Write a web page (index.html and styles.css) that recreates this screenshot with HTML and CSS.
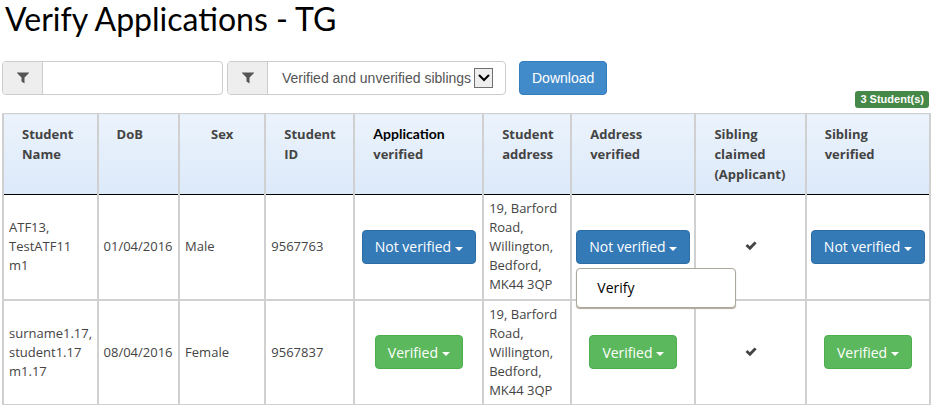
FILE: index.html
```html
<!DOCTYPE html>
<html lang="en">
<head>
  <meta charset="UTF-8">
  <meta name="viewport" content="width=device-width, initial-scale=1.0">
  <title>Verify Applications - TG</title>
  <link rel="stylesheet" href="styles.css">
</head>
<body>

<svg width="0" height="0" class="sprite">
  <symbol id="icon-filter" viewBox="0 0 12 12">
    <path d="M0 0.500H12V1L7.500 5.500V11.500L4.500 9.500V5.500L0 1Z"/>
  </symbol>
  <symbol id="icon-check" viewBox="0 0 12 10">
    <path d="M0.500 5L2.500 3L4.800 5.300L9.500 0.500L11.700 2.300L5 9.300Z"/>
  </symbol>
</svg>

<h1>Verify Applications - TG</h1>

<form class="toolbar">
  <div class="input-group search-group">
    <label class="addon" for="filter-name" aria-label="Filter by name"><svg class="icon"><use href="#icon-filter"/></svg></label>
    <input type="text" id="filter-name">
  </div>
  <div class="input-group select-group">
    <label class="addon" for="filter-siblings" aria-label="Filter by siblings"><svg class="icon"><use href="#icon-filter"/></svg></label>
    <select id="filter-siblings">
      <option>Verified and unverified siblings</option>
      <option>Verified siblings</option>
      <option>Unverified siblings</option>
    </select>
    <span class="select-arrow"><svg viewBox="0 0 12 8"><path d="M1 1L6 6L11 1"/></svg></span>
  </div>
  <button type="button" class="btn btn-download">Download</button>
</form>

<div class="count"><span class="badge">3 Student(s)</span></div>

<table class="students">
  <colgroup>
    <col class="col-name">
    <col class="col-dob">
    <col class="col-sex">
    <col class="col-id">
    <col class="col-application">
    <col class="col-address">
    <col class="col-verified">
    <col class="col-claimed">
    <col class="col-verified">
  </colgroup>
  <thead>
    <tr>
      <th>Student Name</th>
      <th>DoB</th>
      <th class="center">Sex</th>
      <th>Student ID</th>
      <th><span class="current">Application</span> verified</th>
      <th>Student address</th>
      <th>Address verified</th>
      <th>Sibling claimed (Applicant)</th>
      <th>Sibling verified</th>
    </tr>
  </thead>
  <tbody>
    <tr>
      <td>ATF13,<br>TestATF11<br>m1</td>
      <td>01/04/2016</td>
      <td>Male</td>
      <td>9567763</td>
      <td class="center"><button type="button" class="btn btn-primary">Not verified <span class="caret"></span></button></td>
      <td>19, Barford Road, Willington, Bedford, MK44 3QP</td>
      <td class="center">
        <div class="dropdown">
          <button type="button" class="btn btn-primary">Not verified <span class="caret"></span></button>
          <div class="menu"><a href="#">Verify</a></div>
        </div>
      </td>
      <td class="center"><svg class="icon check"><use href="#icon-check"/></svg></td>
      <td class="center"><button type="button" class="btn btn-primary">Not verified <span class="caret"></span></button></td>
    </tr>
    <tr>
      <td>surname1.17,<br>student1.17<br>m1.17</td>
      <td>08/04/2016</td>
      <td>Female</td>
      <td>9567837</td>
      <td class="center"><button type="button" class="btn btn-success">Verified <span class="caret"></span></button></td>
      <td>19, Barford Road, Willington, Bedford, MK44 3QP</td>
      <td class="center"><button type="button" class="btn btn-success">Verified <span class="caret"></span></button></td>
      <td class="center"><svg class="icon check"><use href="#icon-check"/></svg></td>
      <td class="center"><button type="button" class="btn btn-success">Verified <span class="caret"></span></button></td>
    </tr>
  </tbody>
</table>

</body>
</html>
```

FILE: styles.css
```css
* {
  box-sizing: border-box;
}
body {
  margin: 0;
  padding: 0 2px;
  background-color: #fff;
  color: #444;
  font-family: "Open Sans", "Noto Sans", sans-serif;
  font-size: 13px;
}
.sprite {
  position: absolute;
}
h1 {
  margin: 0 0 23px;
  padding-left: 3px;
  font-family: Lato, sans-serif;
  font-size: 32px;
  font-weight: 400;
  line-height: 38px;
  color: #000;
}
.icon {
  width: 12px;
  height: 12px;
  fill: #555;
}
.toolbar {
  display: flex;
  gap: 4px;
  font-family: "Liberation Sans", Arial, sans-serif;
}
.input-group {
  display: flex;
  position: relative;
  height: 34px;
  border: 1px solid #ccc;
  border-radius: 4px;
  overflow: hidden;
}
.search-group {
  width: 221px;
}
.select-group {
  width: 279px;
}
.addon {
  display: flex;
  align-items: center;
  justify-content: center;
  flex: 0 0 40px;
  background-color: #eee;
  border-right: 1px solid #ccc;
}
.input-group input,
.input-group select {
  flex: 1;
  min-width: 0;
  padding: 0 14px;
  border: none;
  background: none;
  color: #555;
  font-family: inherit;
  font-size: 14px;
  appearance: none;
}
.select-arrow {
  position: absolute;
  top: 6px;
  right: 12px;
  display: flex;
  align-items: center;
  justify-content: center;
  width: 19px;
  height: 20px;
  background-color: #eee;
  border: 1px solid #707070;
  pointer-events: none;
}
.select-arrow svg {
  width: 12px;
  height: 8px;
  fill: none;
  stroke: #000;
  stroke-width: 2;
}
.btn {
  height: 34px;
  padding: 0 12px;
  border: 1px solid;
  border-radius: 4px;
  color: #fff;
  font-family: inherit;
  font-size: 14px;
  white-space: nowrap;
  cursor: pointer;
}
.btn-download {
  margin-left: 9px;
  background-color: #428bca;
  border-color: #357ebd;
}
.btn-primary {
  background-color: #337ab7;
  border-color: #2e6da4;
}
.btn-success {
  background-color: #5cb85c;
  border-color: #4cae4c;
}
.caret {
  display: inline-block;
  vertical-align: middle;
  border-top: 4px solid;
  border-left: 4px solid transparent;
  border-right: 4px solid transparent;
}
.count {
  display: flex;
  justify-content: flex-end;
  margin-top: -4px;
  padding: 0 2px 5px;
}
.badge {
  padding: 0 5px;
  background-color: #468847;
  border-radius: 3px;
  color: #fff;
  font-family: "Liberation Sans", Arial, sans-serif;
  font-size: 11px;
  font-weight: bold;
  line-height: 17px;
}
.students {
  width: 100%;
  table-layout: fixed;
  border-collapse: collapse;
}
.col-name { width: 10.200%; }
.col-dob { width: 8.800%; }
.col-sex { width: 9.300%; }
.col-id { width: 9.600%; }
.col-application { width: 13.900%; }
.col-address { width: 9.500%; }
.col-verified { width: 13.400%; }
.col-claimed { width: 11.900%; }
.students th,
.students td {
  border: 1px solid #d0d0d0;
  border-left-width: 2px;
  border-right-width: 2px;
}
.students th {
  height: 81px;
  padding: 10px 10px 10px 18px;
  background: linear-gradient(#ebf3fc, #dce9f9);
  border-bottom: 1px solid #000;
  font-size: 13px;
  font-weight: bold;
  line-height: 20px;
  text-align: left;
  vertical-align: top;
}
.students td {
  height: 105px;
  padding: 4px 0 4px 5px;
  line-height: 19px;
}
.students tbody tr + tr td {
  border-top-width: 2px;
}
.students .center {
  padding-left: 0;
  padding-right: 0;
  text-align: center;
}
.current {
  color: #000;
  font-family: Lato, sans-serif;
  font-size: 14px;
}
.check {
  height: 10px;
  fill: #444;
}
.dropdown {
  display: inline-block;
  position: relative;
}
.menu {
  position: absolute;
  top: 100%;
  left: 0;
  z-index: 1;
  width: 160px;
  margin-top: 4px;
  padding: 9px 20px;
  background-color: #fff;
  border: 1px solid #aca899;
  border-radius: 4px;
  box-shadow: 0 1px 1px #aca899;
  text-align: left;
}
.menu a {
  color: #000;
  font-size: 14px;
  text-decoration: none;
}
```
